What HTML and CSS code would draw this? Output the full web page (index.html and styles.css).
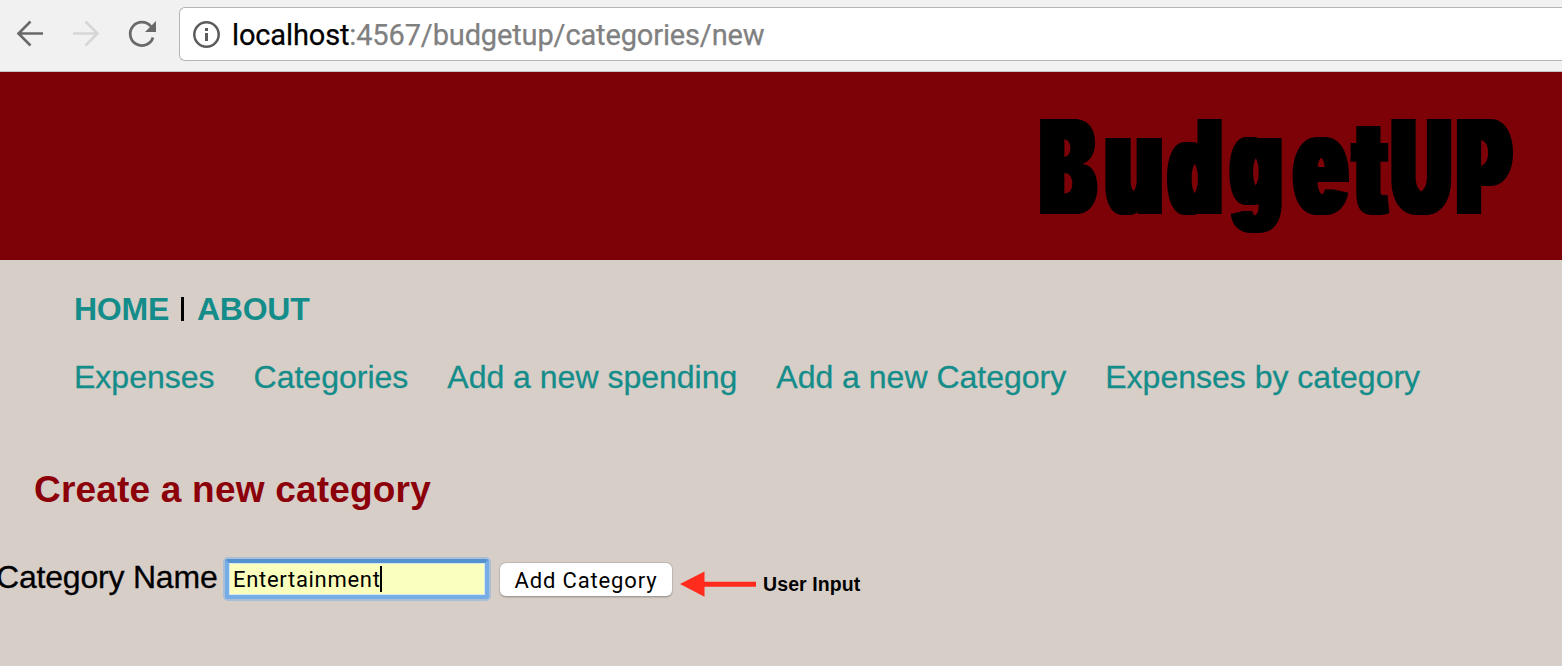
FILE: index.html
```html
<!DOCTYPE html>
<html lang="en">
<head>
<meta charset="utf-8">
<title>BudgetUP</title>
<link rel="stylesheet" href="styles.css">
</head>
<body>
<div class="toolbar">
  <svg class="nav-icons" width="179" height="71" viewBox="0 0 179 71" fill="none">
    <path d="M43 33.500H19M30.500 21.500L18.500 33.500l12 12" stroke="#696969" stroke-width="2.600"/>
    <path d="M73 33.500h24M85.500 21.500l12 12-12 12" stroke="#d6d6d6" stroke-width="2.600"/>
    <path d="M151 26.500A11.700 11.700 0 1 0 153 37.500" stroke="#696969" stroke-width="2.700"/>
    <path d="M156 21v11h-11z" fill="#696969"/>
  </svg>
  <div class="address">
    <svg class="info" width="28" height="28" viewBox="0 0 28 28" fill="none">
      <circle cx="14.500" cy="14.500" r="12.200" stroke="#5c5c5c" stroke-width="2.500"/>
      <path d="M13 8h3v3h-3zM13 13h3v8h-3z" fill="#5c5c5c"/>
    </svg>
    <span class="url"><span class="host">localhost</span>:4567/budgetup/categories/new</span>
  </div>
</div>
<header class="banner">
  <svg class="brand" width="562" height="188" viewBox="1000 72 562 188">
    <filter id="widen" filterUnits="userSpaceOnUse" x="1000" y="72" width="562" height="188"><feMorphology operator="dilate" radius="4 0"/></filter>
    <g filter="url(#widen)"><text class="brand-text" transform="translate(1040 214) scale(.63 1)"><tspan x="0.500">B</tspan><tspan class="tall" x="103">u</tspan><tspan x="204">d</tspan><tspan class="short" x="303" dy="-8">g</tspan><tspan class="tall" x="403" dy="8">e</tspan><tspan x="498">t</tspan><tspan x="558">U</tspan><tspan x="662">P</tspan></text></g>
  </svg>
</header>
<main>
  <nav class="primary"><a class="home">HOME</a><span class="bar"></span><a class="about">ABOUT</a></nav>
  <nav class="links"><a>Expenses</a><a>Categories</a><a>Add a new spending</a><a>Add a new Category</a><a>Expenses by category</a></nav>
  <h1 class="title">Create a new category</h1>
  <form class="form">
    <label class="label">Category Name</label>
    <div class="field"><span>Entertainment</span><i class="caret"></i></div>
    <button class="submit" type="button">Add Category</button>
    <svg class="arrow" width="78" height="26" viewBox="0 0 78 26"><path d="M0 13L24.500 .500v10.200h51.500v5h-51.500v10z" fill="#ff2b1c"/></svg>
    <span class="note">User Input</span>
  </form>
</main>
</body>
</html>
```
FILE: styles.css
```css
body { margin: 0; width: 1562px; height: 666px; overflow: hidden; background: #d7cec8; color: #000; font: 32px/38px "Liberation Sans", sans-serif; }
.toolbar { display: flex; height: 71px; background: #f1f1f1; border-bottom: 1px solid #c9c4c4; }
.nav-icons { flex: none; }
.address { box-sizing: border-box; display: flex; align-items: flex-start; flex: 1; height: 54px; margin-top: 7px; border: 1px solid #b5b5b5; border-right: 0; border-radius: 6px 0 0 6px; background: #fff; }
.info { margin: 12px 0 0 12px; }
.url { margin: 8px 0 0 12px; font: 29px/38px Roboto, sans-serif; letter-spacing: -.14px; color: #808080; -webkit-text-stroke: .25px; white-space: nowrap; }
.host { color: #000; }
.banner { display: flex; justify-content: flex-end; height: 188px; background: #7d0208; }
.brand-text { font-family: Inter, sans-serif; font-size: 131px; font-weight: 900; }
.tall { font-size: 140px; }
.short { font-size: 124px; }
.primary { display: flex; align-items: center; height: 38px; padding: 30px 0 0 74px; color: #148d8a; font-weight: bold; letter-spacing: -.25px; }
.bar { width: 3px; height: 24px; margin: 0 13px 0 12px; background: #000; }
.home { width: 95px; }
.links { display: flex; gap: 39px; height: 38px; padding: 30px 0 0 74px; color: #148d8a; white-space: nowrap; -webkit-text-stroke: .3px; }
.title { margin: 72px 0 0 34px; font-size: 37px; line-height: 44px; letter-spacing: .2px; color: #8b0009; }
.form { display: flex; height: 44px; margin: 45px 0 0 -4px; }
.label { width: 222px; flex: none; margin-top: 1px; letter-spacing: -.2px; white-space: nowrap; -webkit-text-stroke: .3px; }
.field { box-sizing: border-box; display: flex; align-items: center; flex: none; width: 264px; height: 40px; margin: 2px 0 0 7px; padding: 1px 0 0 4px; border: 4px solid #76ade7; border-top-color: #5591ce; border-radius: 3px; background: #faffbd; box-shadow: 0 0 0 2px #a8bfd7, inset 0 0 0 1px #d3e9ed; font: 22px/28px Roboto, sans-serif; letter-spacing: .7px; }
.field span { margin: 1px -1px 0 0; }
.caret { width: 2px; height: 26px; margin-top: -2px; background: #000; }
.submit { box-sizing: border-box; flex: none; width: 174px; height: 35px; margin: 5px 0 0 10px; padding: 2px 0 0; border: 1px solid #bdb6b2; border-bottom-color: #a49e9b; border-radius: 7px; background: #fff; color: #000; font: 22px/30px Roboto, sans-serif; letter-spacing: .85px; box-shadow: 0 1px 1px #bdb5b0; }
.arrow { flex: none; margin: 14px 0 0 6.500px; }
.note { margin: 14px 0 0 5.500px; font-size: 19.500px; line-height: 26px; letter-spacing: .1px; font-weight: bold; white-space: nowrap; }
```
